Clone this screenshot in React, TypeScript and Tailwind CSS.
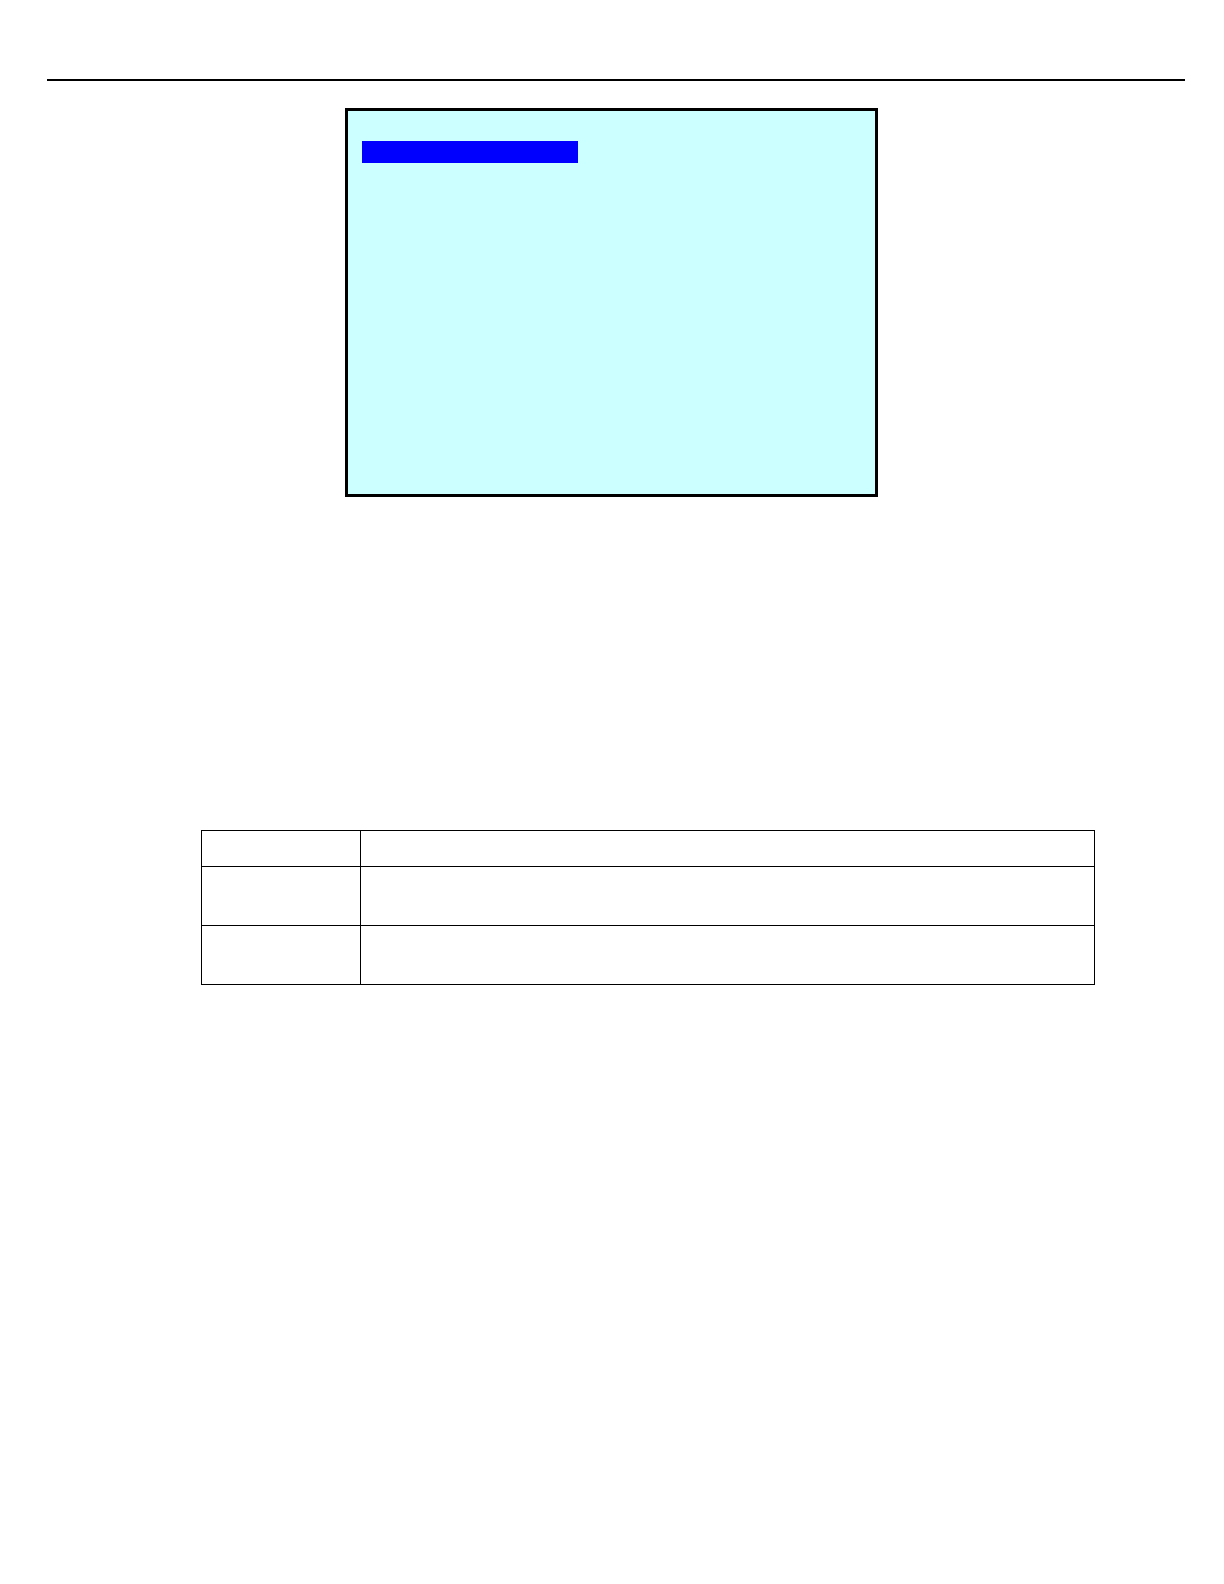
import React from 'react';
import { clsx } from 'clsx';

const rows = [
  { key: 'heading', height: 'h-[36px]' },
  { key: 'first', height: 'h-[59px]' },
  { key: 'second', height: 'h-[59px]' }
];

const MenuScreen: React.FC = () => (
  <section className="ml-[298px] mt-[27px] w-[533px] min-h-[389px] border-3 border-black bg-[#ccffff] px-[14px] pt-[30px]">
    {/* Selected menu line */}
    <div className="w-[216px] h-[22px] bg-[#0000ff]" />
  </section>
);

const DescriptionTable: React.FC = () => (
  <div className="mt-[333px] ml-[154px] mr-[90px]">
    <table className="w-full table-fixed border-separate border-spacing-0 border-t border-l border-black">
      <colgroup>
        <col className="w-[159px]" />
        <col />
      </colgroup>
      <tbody>
        {rows.map((row) => (
          <tr key={row.key}>
            <td className={clsx('border-r border-b border-black p-0', row.height)} />
            <td className={clsx('border-r border-b border-black p-0', row.height)} />
          </tr>
        ))}
      </tbody>
    </table>
  </div>
);

const App: React.FC = () => {
  return (
    <div className="min-h-screen bg-white pt-[79px] pl-[47px] pr-[39px] font-['Liberation_Sans',sans-serif]">
      <header>
        <hr className="border-t-2 border-black" />
      </header>
      <main>
        <MenuScreen />
        <DescriptionTable />
      </main>
    </div>
  );
};

export default App;
